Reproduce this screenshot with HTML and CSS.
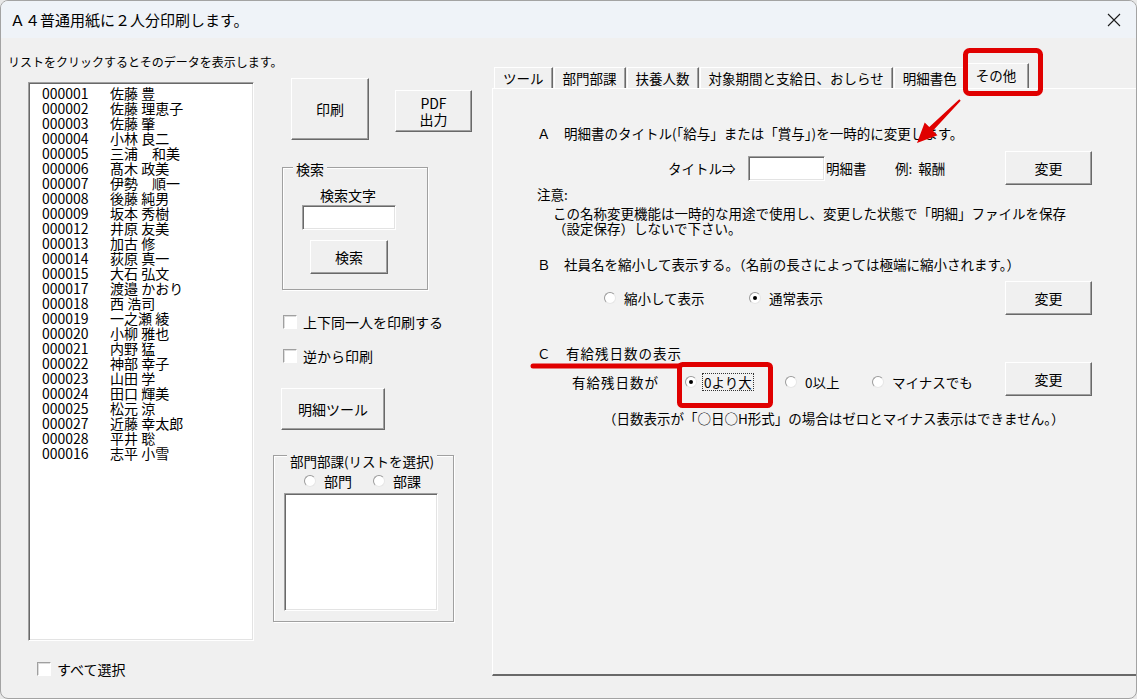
FILE: index.html
```html
<!DOCTYPE html>
<html lang="ja">
<head>
    <meta charset="UTF-8">
    <meta name="viewport" content="width=device-width, initial-scale=1.0">
    <title>Ａ４普通用紙に２人分印刷します。</title>
    <link rel="stylesheet" href="styles.css">
</head>
<body>
    <div class="window">
        <div class="titlebar">
            <span class="title">Ａ４普通用紙に２人分印刷します。</span>
            <span class="close">
                <svg width="14" height="14" viewBox="0 0 14 14"><path d="M1 1L13 13M13 1L1 13" stroke="#1b1b1b" stroke-width="1.1" fill="none"/></svg>
            </span>
        </div>

        <div class="client">
            <!-- staff list -->
            <div class="col-list">
                <p class="hint">リストをクリックするとそのデータを表示します。</p>
                <div class="listbox staff">
                    <div class="row"><span class="code">000001</span>佐藤 豊</div>
                    <div class="row"><span class="code">000002</span>佐藤 理恵子</div>
                    <div class="row"><span class="code">000003</span>佐藤 肇</div>
                    <div class="row"><span class="code">000004</span>小林 良二</div>
                    <div class="row"><span class="code">000005</span>三浦　和美</div>
                    <div class="row"><span class="code">000006</span>髙木 政美</div>
                    <div class="row"><span class="code">000007</span>伊勢　順一</div>
                    <div class="row"><span class="code">000008</span>後藤 純男</div>
                    <div class="row"><span class="code">000009</span>坂本 秀樹</div>
                    <div class="row"><span class="code">000012</span>井原 友美</div>
                    <div class="row"><span class="code">000013</span>加古 修</div>
                    <div class="row"><span class="code">000014</span>荻原 真一</div>
                    <div class="row"><span class="code">000015</span>大石 弘文</div>
                    <div class="row"><span class="code">000017</span>渡邉 かおり</div>
                    <div class="row"><span class="code">000018</span>西 浩司</div>
                    <div class="row"><span class="code">000019</span>一之瀬 綾</div>
                    <div class="row"><span class="code">000020</span>小柳 雅也</div>
                    <div class="row"><span class="code">000021</span>内野 猛</div>
                    <div class="row"><span class="code">000022</span>神部 幸子</div>
                    <div class="row"><span class="code">000023</span>山田 学</div>
                    <div class="row"><span class="code">000024</span>田口 輝美</div>
                    <div class="row"><span class="code">000025</span>松元 涼</div>
                    <div class="row"><span class="code">000027</span>近藤 幸太郎</div>
                    <div class="row"><span class="code">000028</span>平井 聡</div>
                    <div class="row"><span class="code">000016</span>志平 小雪</div>
                </div>
                <label class="check check-all"><span class="box"></span>すべて選択</label>
            </div>

            <!-- print / search controls -->
            <div class="col-mid">
                <div class="print-row">
                    <button class="btn btn-print">印刷</button>
                    <button class="btn btn-pdf">PDF<br>出力</button>
                </div>

                <div class="group search">
                    <span class="group-title">検索</span>
                    <div class="search-label">検索文字</div>
                    <div class="textbox search-input"></div>
                    <button class="btn btn-search">検索</button>
                </div>

                <label class="check check-same"><span class="box"></span>上下同一人を印刷する</label>
                <label class="check check-reverse"><span class="box"></span>逆から印刷</label>

                <button class="btn btn-tool">明細ツール</button>

                <div class="group dept">
                    <span class="group-title dept-title">部門部課(リストを選択)</span>
                    <div class="dept-radios">
                        <span class="opt dept-opt"><span class="radio"></span>部門</span>
                        <span class="opt"><span class="radio"></span>部課</span>
                    </div>
                    <div class="listbox dept-list"></div>
                </div>
            </div>

            <!-- tabs -->
            <div class="col-tabs">
                <div class="tabstrip">
                    <span class="tab">ツール</span>
                    <span class="tab">部門部課</span>
                    <span class="tab">扶養人数</span>
                    <span class="tab">対象期間と支給日、おしらせ</span>
                    <span class="tab">明細書色</span>
                    <span class="tab active">その他</span>
                </div>
                <div class="panel">
                    <p class="sec-title a-title">Ａ　明細書のタイトル(「給与」または「賞与」)を一時的に変更します。</p>
                    <div class="ctl-row a-row">
                        <span class="lbl-title">タイトル⇒</span>
                        <span class="textbox a-input"></span>
                        <span class="lbl-meisai">明細書</span>
                        <span class="lbl-ex">例:&nbsp; 報酬</span>
                        <button class="btn btn-change">変更</button>
                    </div>
                    <p class="caution">注意:</p>
                    <p class="caution-note">この名称変更機能は一時的な用途で使用し、変更した状態で「明細」ファイルを保存<br>（設定保存）しないで下さい。</p>

                    <p class="sec-title b-title">Ｂ　社員名を縮小して表示する。（名前の長さによっては極端に縮小されます。）</p>
                    <div class="ctl-row b-row">
                        <span class="opt b-opt1"><span class="radio"></span>縮小して表示</span>
                        <span class="opt b-opt2"><span class="radio on"></span>通常表示</span>
                        <button class="btn btn-change">変更</button>
                    </div>

                    <p class="sec-title c-title">Ｃ　有給残日数の表示</p>
                    <div class="ctl-row c-row">
                        <span class="c-lbl">有給残日数が</span>
                        <span class="opt c-opt c-opt1"><span class="radio on"></span><span class="focus">0より大</span></span>
                        <span class="opt c-opt c-opt2"><span class="radio"></span>0以上</span>
                        <span class="opt c-opt c-opt3"><span class="radio"></span>マイナスでも</span>
                        <button class="btn btn-change">変更</button>
                    </div>
                    <p class="c-note">（日数表示が「○日○H形式」の場合はゼロとマイナス表示はできません。）</p>
                </div>
            </div>
        </div>

        <!-- red annotations drawn over the dialog -->
        <svg class="marks" width="1137" height="699" viewBox="0 0 1137 699">
            <rect x="965.5" y="50.5" width="75" height="43" rx="4" fill="none" stroke="#e00000" stroke-width="5"/>
            <polygon points="959.3,99.3 929.3,127.1 924.7,122.5 917,143 937.5,135.3 932.9,130.7 960.7,100.7" fill="#e00000"/>
            <path d="M533 366H680" stroke="#e00000" stroke-width="5" stroke-linecap="round"/>
            <rect x="679.5" y="364.5" width="91" height="41" rx="3" fill="none" stroke="#e00000" stroke-width="5"/>
        </svg>
    </div>
</body>
</html>
```

FILE: styles.css
```css
* {
    margin: 0;
    padding: 0;
    box-sizing: border-box;
}

body {
    width: 1137px;
    height: 699px;
    overflow: hidden;
    background: #e8e8e8;
    font-family: "Noto Sans CJK JP", sans-serif;
    color: #000;
}

.window {
    position: relative;
    width: 1137px;
    height: 699px;
    background: #f0f0f0;
    border: 1px solid #a3a3a3;
    border-radius: 8px;
    overflow: hidden;
}

/* title bar */
.titlebar {
    height: 37px;
    background: #eff3f8;
    display: flex;
    align-items: center;
    padding-left: 9px;
}

.title {
    font-size: 15px;
    line-height: 20px;
}

.close {
    margin-left: auto;
    width: 44px;
    height: 37px;
    display: flex;
    align-items: center;
    justify-content: center;
}

.client {
    display: flex;
    height: 660px;
}

/* shared controls */
.btn {
    display: block;
    font-family: inherit;
    font-size: 14px;
    color: #000;
    background: #f0f0f0;
    border: 1px solid;
    border-color: #fff #696969 #696969 #fff;
    box-shadow: inset -1px -1px 0 #a0a0a0;
}

.listbox,
.textbox {
    background: #fff;
    border: 1px solid;
    border-color: #a0a0a0 #fff #fff #a0a0a0;
    box-shadow: inset 1px 1px 0 #696969, inset -1px -1px 0 #e3e3e3;
}

.check {
    display: flex;
    align-items: center;
    gap: 6px;
    font-size: 14px;
    line-height: 16px;
}

.box {
    width: 14px;
    height: 14px;
    background: #fff;
    border: 1px solid;
    border-color: #a0a0a0 #fff #fff #a0a0a0;
    box-shadow: inset 1px 1px 0 #dcdcdc;
}

.opt {
    display: flex;
    align-items: center;
    gap: 8px;
    white-space: nowrap;
}

.radio {
    position: relative;
    width: 12px;
    height: 12px;
    flex: none;
    border-radius: 50%;
    background: #fff;
    border: 1px solid;
    border-color: #9a9a9a #e6e6e6 #e6e6e6 #9a9a9a;
}

.radio.on::after {
    content: "";
    position: absolute;
    left: 3px;
    top: 3px;
    width: 4px;
    height: 4px;
    border-radius: 50%;
    background: #000;
}

.group {
    border: 1px solid #a0a0a0;
    box-shadow: inset 1px 1px 0 #fff, 1px 1px 0 #fff;
}

.group-title {
    display: block;
    width: max-content;
    margin: -7px 0 0 10px;
    padding: 0 3px;
    background: #f0f0f0;
    font-size: 14px;
    line-height: 16px;
}

/* left column */
.col-list {
    width: 272px;
    padding-left: 7px;
}

.hint {
    font-size: 12px;
    line-height: 16px;
    margin-top: 16px;
    white-space: nowrap;
}

.staff {
    width: 226px;
    height: 559px;
    margin: 12px 0 0 20px;
    padding: 3px 0 0 13px;
    font-size: 14px;
}

.row {
    display: flex;
    height: 15px;
    line-height: 15px;
    white-space: nowrap;
}

.code {
    width: 68px;
}

.check-all {
    margin: 20px 0 0 29px;
}

/* middle column */
.col-mid {
    width: 219px;
}

.print-row {
    display: flex;
    align-items: flex-start;
    margin-top: 40px;
}

.btn-print {
    width: 78px;
    height: 62px;
    margin-left: 18px;
}

.btn-pdf {
    width: 77px;
    height: 42px;
    margin: 12px 0 0 26px;
    line-height: 16px;
}

.search {
    width: 146px;
    height: 123px;
    margin: 27px 0 0 9px;
}

.search-label {
    margin: 10px 0 0 37px;
    font-size: 14px;
    line-height: 16px;
}

.search-input {
    width: 94px;
    height: 25px;
    margin: 2px 0 0 19px;
}

.btn-search {
    width: 78px;
    height: 34px;
    margin: 10px 0 0 27px;
}

.check-same {
    margin: 24px 0 0 10px;
}

.check-reverse {
    margin: 18px 0 0 10px;
}

.btn-tool {
    width: 104px;
    height: 42px;
    margin: 24px 0 0 8px;
}

.dept {
    width: 181px;
    height: 167px;
    margin-top: 25px;
}

.dept-title {
    margin: -5px 0 0 13px;
    line-height: 20px;
    font-size: 13.5px;
}

.dept-radios {
    display: flex;
    padding-left: 30px;
    font-size: 14px;
    line-height: 16px;
    margin-top: 2px;
}

.dept-opt {
    width: 69px;
}

.dept-list {
    width: 154px;
    height: 118px;
    margin: 4px 0 0 10px;
}

/* tabs */
.col-tabs {
    flex: 1;
    display: flex;
    flex-direction: column;
}

.tabstrip {
    height: 50px;
    display: flex;
    align-items: flex-end;
    padding-left: 2px;
}

.tab {
    height: 21px;
    padding: 0 8px;
    margin-right: 1px;
    font-size: 13.5px;
    line-height: 20px;
    white-space: nowrap;
    border: 1px solid;
    border-bottom: none;
    border-color: #fff #696969 transparent #fff;
    box-shadow: inset -1px 0 0 #a0a0a0;
}

.tab.active {
    position: relative;
    height: 25px;
    padding: 0 12px;
    margin-left: -4px;
    background: #f2f2f2;
    line-height: 22px;
}

.panel {
    height: 588px;
    background: #f2f2f2;
    border-top: 1px solid #fff;
    border-left: 1px solid #fff;
    border-bottom: 2px solid #696969;
    padding-left: 44px;
    font-size: 13.5px;
}

.sec-title {
    line-height: 18px;
    white-space: nowrap;
}

.a-title {
    margin-top: 35px;
}

.ctl-row {
    display: flex;
    align-items: center;
    height: 34px;
}

.btn-change {
    width: 87px;
    height: 34px;
    flex: none;
}

.a-row {
    margin-top: 9px;
    padding-left: 131px;
}

.lbl-title {
    width: 80px;
}

.a-input {
    width: 77px;
    height: 25px;
}

.lbl-meisai {
    width: 70px;
    padding-left: 1px;
}

.lbl-ex {
    width: 110px;
}

.caution {
    margin-top: 1px;
    line-height: 16px;
}

.caution-note {
    margin-top: 4px;
    padding-left: 16px;
    line-height: 15px;
}

.b-title {
    margin-top: 19px;
}

.b-row {
    margin-top: 8px;
    padding-left: 67px;
}

.b-opt1 {
    width: 145px;
}

.b-opt2 {
    width: 256px;
}

.c-title {
    margin-top: 29px;
    letter-spacing: 1px;
}

.c-row {
    padding-left: 35px;
}

.c-lbl {
    width: 113px;
    padding-top: 6px;
    letter-spacing: 1px;
}

.c-opt {
    padding-top: 6px;
}

.c-opt1 {
    width: 100px;
}

.c-opt2 {
    width: 87px;
}

.c-opt3 {
    width: 133px;
}

.focus {
    border: 1px dotted #333;
    padding: 0 1px;
    margin-left: -3px;
    line-height: 16px;
}

.c-note {
    margin-top: 14px;
    padding-left: 66px;
    line-height: 16px;
}

.marks {
    position: absolute;
    left: -1px;
    top: -1px;
    pointer-events: none;
}
```
